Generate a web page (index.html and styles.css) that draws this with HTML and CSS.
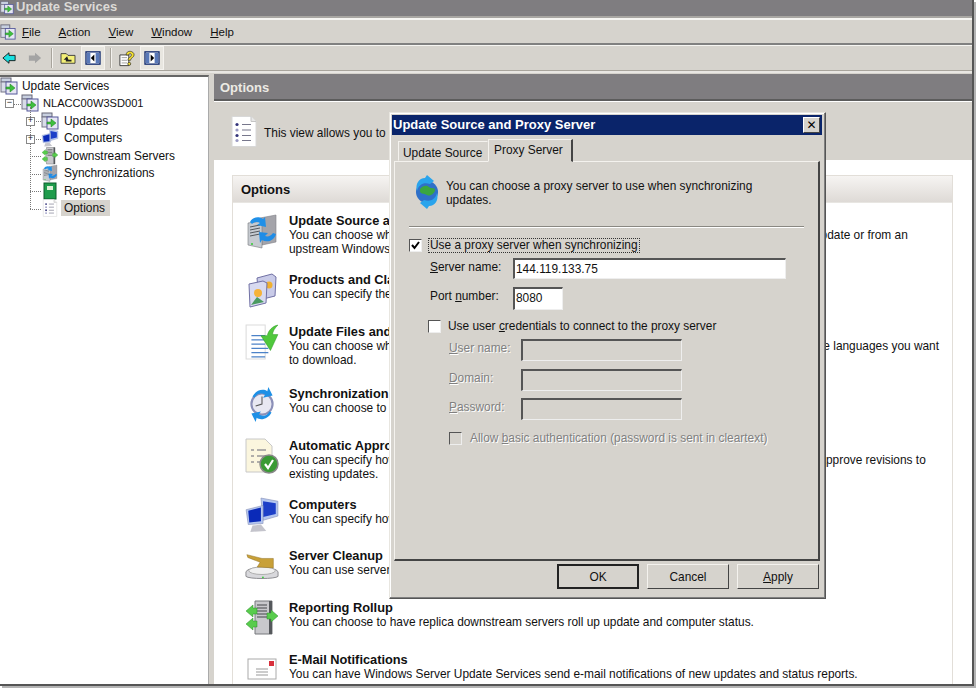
FILE: index.html
```html
<!DOCTYPE html>
<html lang="en">
<head>
<meta charset="utf-8">
<title>Update Services</title>
<link rel="stylesheet" href="styles.css">
</head>
<body>
<svg class="defs" width="0" height="0" aria-hidden="true">
  <defs>
    <symbol id="i-mmc" viewBox="0 0 18 18">
      <rect x="1" y="1" width="10" height="4" fill="#c8d0e0" stroke="#667"/>
      <rect x="1" y="5" width="8" height="10" fill="#d8dce8" stroke="#778"/>
      <rect x="6" y="5" width="11" height="12" fill="#e6e6f4" stroke="#55589a"/>
      <path d="M6 10h4V7l5 4-5 4v-3H6z" fill="#3fbf3f" stroke="#1c7c1c" stroke-width=".5"/>
    </symbol>
    <symbol id="i-list" viewBox="0 0 26 32">
      <path d="M1 1h19l5 5v25H1z" fill="#fff" stroke="#d8d8d8"/>
      <path d="M20 1v5h5" fill="#e8e8e8" stroke="#c4c4c4"/>
      <g fill="#33337a"><circle cx="6" cy="9" r="1.6"/><circle cx="6" cy="20" r="1.6"/></g>
      <g fill="#9a9ac4"><circle cx="6" cy="14.500" r="1.600"/><circle cx="6" cy="25" r="1.600"/></g>
      <path d="M11 9h9M11 14.500h9M11 20h9M11 25h9" stroke="#77778c" stroke-width="1.200"/>
    </symbol>
    <symbol id="i-screens" viewBox="0 0 32 34">
      <path d="M15 1l16 3v14l-14 4z" fill="#b4c6f0" stroke="#8a94b8" stroke-width=".6"/>
      <path d="M17 4l12 2v10l-12 3z" fill="#1d3fc8"/>
      <path d="M1 12l16-4v17L3 26z" fill="#b4c6f0" stroke="#8a94b8" stroke-width=".6"/>
      <path d="M3 13l12-3v13L4 24z" fill="#0a2ab8"/>
      <path d="M7 27l8-1 5 6-15 1z" fill="#c4c4cc"/>
    </symbol>
    <symbol id="i-servers" viewBox="0 0 32 36">
      <path d="M14 5l16-3v27l-14 3z" fill="#a4a4aa" stroke="#808086" stroke-width=".6"/>
      <path d="M2 10l14-2v27L2 32z" fill="#c6cad0" stroke="#77787c" stroke-width=".6"/>
      <path d="M4 14l10-2M4 17l10-2M4 20l10-2M4 23l10-2" stroke="#55585c"/>
      <circle cx="6" cy="31" r="1" fill="#3c3"/>
      <path d="M4 9c2-5 9-6 13-3l2-2 1 10-9-2 3-2c-3-2-6-1-8 1z" fill="#2090e8"/>
      <path d="M30 21c-2 7-9 9-14 6l-2 3-1-11 9 1-3 3c3 1 6 0 8-3z" fill="#1f8ce6"/>
    </symbol>
    <symbol id="i-books" viewBox="0 0 32 36">
      <path d="M11 6l15-4 4 3-1 19-16 4z" fill="#c9cbe8" stroke="#7070a4"/>
      <circle cx="23" cy="13" r="3.500" fill="#f0b030"/>
      <path d="M3 12l14-3 4 2-1 20-16 4z" fill="#d8daf0" stroke="#7070a4"/>
      <circle cx="12" cy="21" r="4" fill="#f5b23a"/>
      <path d="M5 33l6-8 7 5z" fill="#4a9a60"/>
    </symbol>
    <symbol id="i-download" viewBox="0 0 32 34">
      <path d="M1 1h18v32H1z" fill="#fff" stroke="#dcdcdc"/>
      <path d="M6 11h13M6 15h13M6 19h13M6 23h16M6 27h16M6 31h13" stroke="#4c82c8" stroke-width="1.300"/>
      <path d="M31 1c-5 1-9 5-10 10h-6l9 14 7-15h-5c0-3 2-6 5-9z" fill="#50c83c" stroke="#2f9c2a" stroke-width=".5"/>
    </symbol>
    <symbol id="i-clock" viewBox="0 0 28 34">
      <circle cx="14" cy="17" r="10" fill="#e8e8f2" stroke="#8c90b8" stroke-width="2"/>
      <path d="M14 10v7l-6 2" stroke="#555" fill="none"/>
      <path d="M5 10c3-6 10-8 14-5l1-4 4 8-9 2 2-3c-4-2-8-1-10 3z" fill="#1e90e6"/>
      <path d="M23 25c-3 6-10 8-14 5l-1 4-4-8 9-2-2 3c4 2 8 1 10-3z" fill="#1e90e6"/>
    </symbol>
    <symbol id="i-approve" viewBox="0 0 34 36">
      <path d="M1 1h19l7 7v26H1z" fill="#fbf6de" stroke="#c8c8c8"/>
      <path d="M6 12h3M12 12h9M6 18h3M12 18h9M6 24h3M12 24h5" stroke="#667" stroke-width="1.200"/>
      <circle cx="24" cy="26" r="9" fill="#3a9a34" stroke="#888" stroke-width="1.500"/>
      <path d="M20 26l3 4 5-8" stroke="#fff" stroke-width="2.200" fill="none"/>
    </symbol>
    <symbol id="i-cleanup" viewBox="0 0 36 36">
      <path d="M1 24c3-6 31-6 34 0v5c-3 3-31 3-34 0z" fill="#d8d8dc" stroke="#88888c"/>
      <ellipse cx="18" cy="23" rx="14" ry="4" fill="#f0f0f0" stroke="#aaa"/>
      <path d="M2 6l16 4 12 0v10l-17-1 3-5L3 9z" fill="#c8a038" stroke="#8c6c1c" stroke-width=".5"/>
      <circle cx="19" cy="30" r="1" fill="#3c3"/>
    </symbol>
    <symbol id="i-rollup" viewBox="0 0 34 36">
      <path d="M10 1h17v33H10z" fill="#c8c8cc" stroke="#77787c"/>
      <path d="M24 1l3 0v33h-3z" fill="#55585c"/>
      <path d="M12 5h10M12 8h10M12 11h10M12 14h10M12 17h10" stroke="#44464a"/>
      <path d="M1 11l7-6v3h4v6H8v3zM1 24l7-6v3h4v6H8v3z" fill="#58cc4c" stroke="#2c8c2c" stroke-width=".5"/>
      <path d="M33 16l-7-6v3h-4v6h4v3z" fill="#58cc4c" stroke="#2c8c2c" stroke-width=".5"/>
    </symbol>
    <symbol id="i-mail" viewBox="0 0 34 36">
      <rect x="3" y="7" width="28" height="20" fill="#fff" stroke="#aaa"/>
      <rect x="24" y="9" width="5" height="5" fill="#d8303c"/>
      <path d="M11 17h12M11 20h12M11 23h12" stroke="#999"/>
    </symbol>
    <symbol id="i-sync" viewBox="0 0 28 36">
      <circle cx="14" cy="18" r="11" fill="#2f70c8"/>
      <path d="M7 15c3-4 7-4 9-2s6 0 6 3-5 7-8 5-8 0-7-6z" fill="#3aa640"/>
      <path d="M14 1l7 6-4 3c-6-2-11 0-13 7C2 10 6 4 12 4z" fill="#2aa4ec"/>
      <path d="M14 35l-7-6 4-3c6 2 11 0 13-7 2 7-2 13-8 13z" fill="#2aa4ec"/>
    </symbol>
  </defs>
</svg>

<div class="window">
  <header class="titlebar">
    <svg class="tb-icon"><use href="#i-mmc"/></svg>
    <span class="title-text">Update Services</span>
  </header>

  <nav class="menubar">
    <svg class="menu-icon"><use href="#i-mmc"/></svg>
    <span class="menu-item"><u>F</u>ile</span>
    <span class="menu-item"><u>A</u>ction</span>
    <span class="menu-item"><u>V</u>iew</span>
    <span class="menu-item"><u>W</u>indow</span>
    <span class="menu-item"><u>H</u>elp</span>
  </nav>

  <div class="toolbar">
    <svg class="tool" viewBox="0 0 16 16"><path d="M1 8l7-6v3h7v6H8v3z" fill="#19e0e0" stroke="#111" stroke-width="1"/></svg>
    <svg class="tool tool-gap" viewBox="0 0 16 16"><path d="M15 8L8 2v3H1v6h7v3z" fill="#a4a4a4"/></svg>
    <span class="tool-sep"></span>
    <svg class="tool" viewBox="0 0 18 16"><path d="M1 14V3h6l2 2h8v9z" fill="#f4f078" stroke="#333"/><path d="M8 6L4 10h2.500v2H13v-2H9.500z" fill="#222"/></svg>
    <span class="tool-btn"><svg class="tool" viewBox="0 0 18 16"><rect x="1" y="1" width="16" height="14" fill="#fff" stroke="#0a246a" stroke-width="1.500"/><rect x="2" y="2" width="4" height="12" fill="#5878b8"/><rect x="12" y="2" width="4" height="12" fill="#5878b8"/><path d="M10.500 4L6.500 8l4 4z" fill="#000"/></svg></span>
    <span class="tool-sep"></span>
    <svg class="tool tool-help" viewBox="0 0 18 18"><path d="M1 5h10v12H1z" fill="#fff" stroke="#333"/><path d="M3 8h6M3 11h6M3 14h6" stroke="#999"/><path d="M8 5c0-6 9-5 9 0 0 3-4 3-4 6h-3c0-4 4-3 4-6 0-2-3-2-3 0z" fill="#f4e030" stroke="#222" stroke-width=".7"/><circle cx="11.500" cy="15" r="1.700" fill="#f4e030" stroke="#222" stroke-width=".7"/></svg>
    <span class="tool-btn"><svg class="tool" viewBox="0 0 18 16"><rect x="1" y="1" width="16" height="14" fill="#fff" stroke="#0a246a" stroke-width="1.500"/><rect x="2" y="2" width="4" height="12" fill="#5878b8"/><rect x="12" y="2" width="4" height="12" fill="#5878b8"/><path d="M7.500 4l4 4-4 4z" fill="#000"/></svg></span>
  </div>

  <main class="panes">
    <aside class="tree">
      <div class="tree-row tree-top"><svg class="tree-icon"><use href="#i-mmc"/></svg><span class="tree-label">Update Services</span></div>
      <div class="tree-row tree-top tree-server"><span class="toggle">−</span><svg class="tree-icon"><use href="#i-mmc"/></svg><span class="tree-label">NLACC00W3SD001</span></div>
      <div class="tree-children">
        <div class="tree-row child"><span class="toggle">+</span><svg class="tree-icon"><use href="#i-mmc"/></svg><span class="tree-label">Updates</span></div>
        <div class="tree-row child"><span class="toggle">+</span><svg class="tree-icon"><use href="#i-screens"/></svg><span class="tree-label">Computers</span></div>
        <div class="tree-row child"><svg class="tree-icon"><use href="#i-rollup"/></svg><span class="tree-label">Downstream Servers</span></div>
        <div class="tree-row child"><svg class="tree-icon"><use href="#i-servers"/></svg><span class="tree-label">Synchronizations</span></div>
        <div class="tree-row child"><svg class="tree-icon" viewBox="0 0 16 18"><rect x="2" y="1" width="12" height="16" fill="#1f9c4c" stroke="#0c5c2c"/><rect x="5" y="4" width="6" height="4" fill="#dff0d8"/></svg><span class="tree-label">Reports</span></div>
        <div class="tree-row child last"><svg class="tree-icon"><use href="#i-list"/></svg><span class="tree-label selected">Options</span></div>
      </div>
    </aside>

    <section class="content">
      <h1 class="content-head">Options</h1>
      <div class="intro">
        <svg class="intro-icon"><use href="#i-list"/></svg>
        <p>This view allows you to configure Windows Server Update Services settings.</p>
      </div>
      <div class="body">
        <div class="card">
          <h2 class="card-head">Options</h2>
          <div class="row row-59">
            <svg class="row-icon"><use href="#i-servers"/></svg>
            <div><b>Update Source and Proxy Server</b><br>You can choose whether this Windows Server Update Services server synchronizes from Microsoft Update or from an<br>upstream Windows Server Update Services server.</div>
          </div>
          <div class="row row-52">
            <svg class="row-icon"><use href="#i-books"/></svg>
            <div><b>Products and Classifications</b><br>You can specify the products for which you want updates and the types of updates you want.</div>
          </div>
          <div class="row row-62">
            <svg class="row-icon"><use href="#i-download"/></svg>
            <div><b>Update Files and Languages</b><br>You can choose whether to download update files and where you store them. You may also choose the languages you want<br>to download.</div>
          </div>
          <div class="row row-52">
            <svg class="row-icon"><use href="#i-clock"/></svg>
            <div><b>Synchronization Schedule</b><br>You can choose to synchronize manually or set a schedule for daily automatic synchronization.</div>
          </div>
          <div class="row row-59">
            <svg class="row-icon"><use href="#i-approve"/></svg>
            <div><b>Automatic Approvals</b><br>You can specify how to automatically approve installation of updates for specified groups and how to approve revisions to<br>existing updates.</div>
          </div>
          <div class="row row-51">
            <svg class="row-icon"><use href="#i-screens"/></svg>
            <div><b>Computers</b><br>You can specify how you assign computers to groups.</div>
          </div>
          <div class="row row-52">
            <svg class="row-icon"><use href="#i-cleanup"/></svg>
            <div><b>Server Cleanup</b><br>You can use server cleanup to free up old computers, updates and update files from your server.</div>
          </div>
          <div class="row row-52">
            <svg class="row-icon"><use href="#i-rollup"/></svg>
            <div><b>Reporting Rollup</b><br>You can choose to have replica downstream servers roll up update and computer status.</div>
          </div>
          <div class="row row-52">
            <svg class="row-icon"><use href="#i-mail"/></svg>
            <div><b>E-Mail Notifications</b><br>You can have Windows Server Update Services send e-mail notifications of new updates and status reports.</div>
          </div>
        </div>
      </div>
    </section>
  </main>
</div>

<div class="dialog">
  <div class="dlg-title">
    <span>Update Source and Proxy Server</span>
    <span class="dlg-close">✕</span>
  </div>
  <div class="tabs">
    <span class="tab">Update Source</span>
    <span class="tab tab-active">Proxy Server</span>
  </div>
  <div class="tab-panel">
    <div class="panel-intro">
      <svg class="panel-icon"><use href="#i-sync"/></svg>
      <p>You can choose a proxy server to use when synchronizing updates.</p>
    </div>
    <hr class="rule">
    <div class="check-line check-proxy">
      <span class="check"><svg viewBox="0 0 11 11"><path d="M2 5l2.500 3L9 2" fill="none" stroke="#000" stroke-width="2"/></svg></span>
      <span class="focus">Use a proxy server when synchronizing</span>
    </div>
    <div class="field field-server">
      <label class="field-label"><u>S</u>erver name:</label>
      <span class="input input-server">144.119.133.75</span>
    </div>
    <div class="field field-port">
      <label class="field-label">Port <u>n</u>umber:</label>
      <span class="input input-port">8080</span>
    </div>
    <div class="check-line check-creds">
      <span class="check"></span>
      <span>Use user <u>c</u>redentials to connect to the proxy server</span>
    </div>
    <div class="sub-field">
      <label class="sub-label disabled"><u>U</u>ser name:</label>
      <span class="input input-off"></span>
    </div>
    <div class="sub-field">
      <label class="sub-label disabled"><u>D</u>omain:</label>
      <span class="input input-off"></span>
    </div>
    <div class="sub-field">
      <label class="sub-label disabled"><u>P</u>assword:</label>
      <span class="input input-off"></span>
    </div>
    <div class="check-line check-basic">
      <span class="check check-off"></span>
      <span class="disabled">Allow <u>b</u>asic authentication (password is sent in cleartext)</span>
    </div>
  </div>
  <div class="buttons">
    <span class="btn btn-default">OK</span>
    <span class="btn">Cancel</span>
    <span class="btn"><u>A</u>pply</span>
  </div>
</div>
</body>
</html>
```

FILE: styles.css
```css
* { box-sizing: border-box; }
html, body { margin: 0; padding: 0; }
body {
  width: 976px;
  height: 688px;
  overflow: hidden;
  background: #fff;
  font: 11.900px/14px "Liberation Sans", Arial, sans-serif;
  color: #111;
  position: relative;
}
.defs { position: absolute; }

.window {
  width: 974px;
  height: 686px;
  background: #d6d3cd;
  border-right: 2px solid #555;
  border-bottom: 2px solid #555;
  box-shadow: 2px 2px 0 #b4b4b4;
  display: flex;
  flex-direction: column;
  overflow: hidden;
}

.titlebar {
  height: 18px;
  flex: none;
  background: #7f7d80;
  color: #dcdad6;
  font-weight: bold;
  font-size: 13px;
  display: flex;
  align-items: flex-start;
  border-bottom: 2px solid #a8a6a2;
  overflow: hidden;
}
.title-text { line-height: 14px; margin-left: 2px; }
.tb-icon { width: 14px; height: 15px; flex: none; }

.menubar {
  height: 27px;
  flex: none;
  display: flex;
  align-items: center;
  font-size: 11.500px;
  border-top: 2px solid #f6f5f2;
  border-bottom: 2px solid #808080;
}
.menu-icon { width: 16px; height: 18px; flex: none; margin-right: 6px; }
.menu-item { margin-right: 18px; }

.toolbar {
  height: 25px;
  flex: none;
  display: flex;
  align-items: center;
  padding-left: 1px;
  border-top: 1px solid #f6f5f2;
}
.tool { width: 16px; height: 14px; flex: none; display: block; }
.tool-gap { margin-left: 10px; }
.tool-help { height: 17px; }
.tool-sep { width: 2px; height: 20px; margin: 0 7px 0 8px; background: #a8a49c; border-right: 1px solid #f4f2ee; }
.tool-btn { padding: 4px 3px; margin-left: 5px; height: 24px; background: #e8e6e0; border: 1px solid #f4f2ee; }
.tool-btn + .tool-sep { margin-left: 5px; }

.panes {
  flex: 1;
  min-height: 0;
  display: flex;
  gap: 5px;
  padding-top: 4px;
  background: linear-gradient(#a8a49c 1px, #e8e6e2 1px, #e8e6e2 3px, #d6d3cd 3px);
}

.tree {
  width: 209px;
  flex: none;
  background: #fff;
  margin-top: 1px;
  border-top: 2px solid #666;
  border-right: 1px solid #aaa;
}
.tree-row {
  height: 17.500px;
  display: flex;
  align-items: center;
  position: relative;
}
.tree-icon { width: 18px; height: 18px; flex: none; }
.tree-label { margin-left: 2px; padding: 1px 3px; white-space: nowrap; }
.tree-top .tree-label { margin-left: 1px; }
.tree-server { padding-left: 21px; }
.tree-server .tree-label { font-size: 11.100px; }
.tree-server::before {
  content: "";
  position: absolute;
  left: 14px;
  width: 7px;
  top: 9px;
  border-top: 1px dotted #777;
}
.tree-children {
  position: relative;
}
.tree-children::before {
  content: "";
  position: absolute;
  left: 30px;
  top: -5px;
  bottom: 8px;
  border-left: 1px dotted #777;
}
.child { padding-left: 41px; }
.child::before {
  content: "";
  position: absolute;
  left: 30px;
  width: 11px;
  top: 9px;
  border-top: 1px dotted #777;
}
.toggle {
  position: absolute;
  width: 9px;
  height: 9px;
  background: #fff;
  border: 1px solid #888;
  font: 9px/7px "Liberation Mono", monospace;
  text-align: center;
  z-index: 1;
}
.child .toggle { left: 26px; top: 5px; }
.tree-server .toggle { left: 5px; top: 4px; }
.selected { background: #d6d3cd; padding-left: 3px; padding-right: 5px; }

.content {
  flex: 1;
  min-width: 0;
  display: flex;
  flex-direction: column;
  background: #fff;
}
.content-head {
  height: 27px;
  flex: none;
  margin: 0;
  background: #7f7d80;
  color: #eceae4;
  font-size: 13px;
  font-weight: bold;
  line-height: 27px;
  padding-left: 6px;
  border-bottom: 2px solid #5c5c5c;
}
.intro {
  height: 59px;
  flex: none;
  display: flex;
  align-items: center;
  gap: 7px;
  padding-left: 17px;
  background: #d6d3cd;
  border-top: 1px solid #fff;
}
.intro p { margin: 4px 0 0; }
.intro-icon { width: 26px; height: 33px; flex: none; }

.body {
  flex: 1;
  min-height: 0;
  padding: 15px 19px 0 18px;
  overflow: hidden;
}
.card {
  border: 1px solid #e2ded8;
  height: 600px;
}
.card-head {
  height: 27px;
  margin: 0;
  font-size: 13px;
  line-height: 27px;
  padding-left: 8px;
  background: linear-gradient(#f6f4f2, #dedad6);
  border-bottom: 1px solid #e8e6e2;
}
.row {
  display: flex;
  padding-left: 56px;
  position: relative;
  white-space: nowrap;
}
.row b { font-size: 12.800px; }
.row-icon {
  position: absolute;
  left: 12px;
  top: -1px;
  width: 34px;
  height: 36px;
}
.row:first-of-type { margin-top: 11px; }
.row-51 { height: 51px; }
.row-52 { height: 52px; }
.row-59 { height: 59px; }
.row-62 { height: 62px; }

.dialog {
  position: absolute;
  left: 389px;
  top: 112px;
  width: 437px;
  height: 487px;
  background: #d6d3cd;
  border: 1px solid;
  border-color: #e8e6e0 #555 #555 #e8e6e0;
  padding: 2px;
  box-shadow: inset -1px -1px 0 #808080, inset 1px 1px 0 #fff;
}
.dlg-title {
  height: 20px;
  margin: 0 1px 0 0;
  background: #0a246a;
  color: #fff;
  font-weight: bold;
  font-size: 13px;
  line-height: 20px;
  padding: 0 2px 0 1px;
  display: flex;
  justify-content: space-between;
  align-items: center;
}
.dlg-close {
  width: 17px;
  height: 16px;
  background: #d6d3cd;
  color: #000;
  font: bold 12px/14px "DejaVu Sans", sans-serif;
  text-align: center;
  border: 1px solid;
  border-color: #fff #444 #444 #fff;
}
.tabs {
  height: 26px;
  display: flex;
  align-items: flex-end;
  padding-left: 6px;
  position: relative;
  z-index: 1;
}
.tab {
  height: 20px;
  width: 90px;
  padding: 4px 0 0 4px;
  border: 1px solid;
  border-color: #f4f2ee transparent transparent #f4f2ee;
}
.tab-active {
  height: 23px;
  width: 85px;
  margin-bottom: -1px;
  padding-left: 5px;
  padding-top: 3px;
  background: #d6d3cd;
  border-color: #f4f2ee #444 #d6d3cd #f4f2ee;
  border-right-width: 2px;
}
.tab-panel {
  width: 426px;
  height: 400px;
  margin-left: 2px;
  border: 1px solid;
  border-color: #f4f2ee #444 #444 #f4f2ee;
  border-width: 1px 2px 2px 1px;
  position: relative;
}
.panel-intro {
  display: flex;
  gap: 5px;
  padding: 12px 0 0 18px;
  height: 64px;
}
.panel-intro p { margin: 5px 0 0; width: 340px; }
.panel-icon { width: 28px; height: 36px; flex: none; }
.rule {
  margin: 0 14px;
  border: 0;
  border-top: 1px solid #8a8882;
  border-bottom: 1px solid #fff;
}
.check-line { display: flex; align-items: center; }
.check {
  width: 13px;
  height: 13px;
  flex: none;
  background: #fff;
  border: 1px solid;
  border-color: #555 #eee #eee #555;
}
.check svg { display: block; width: 11px; height: 11px; }
.check-off { background: #d6d3cd; }
.check-proxy { margin: 10px 0 0 14px; gap: 6px; }
.focus { border: 1px dotted #333; padding: 0 1px; line-height: 13px; }
.field { display: flex; align-items: center; margin-left: 35px; }
.field-server { margin-top: 5px; }
.field-port { margin-top: 8px; }
.field-label { width: 83px; }
.field-server .field-label { padding-bottom: 3px; }
.field-port .field-label { padding-bottom: 5px; }
.input {
  height: 22px;
  background: #fff;
  border: 1px solid;
  border-color: #555 #eee #eee #555;
  border-width: 2px 1px 1px 2px;
  padding-left: 1px;
  line-height: 19px;
}
.input-server { width: 273px; height: 21px; line-height: 18px; }
.input-port { width: 50px; height: 23px; }
.check-creds { margin: 9px 0 0 33px; gap: 7px; }
.sub-field { display: flex; align-items: center; height: 22px; margin: 7.500px 0 0 54px; }
.check-creds + .sub-field { margin-top: 6px; }
.sub-label { width: 72px; padding-bottom: 4px; }
.input-off { width: 161px; background: #d6d3cd; }
.check-basic { margin: 11px 0 0 54px; gap: 8px; }
.disabled { color: #808080; text-shadow: 1px 1px 0 #fff; }
.buttons {
  display: flex;
  justify-content: flex-end;
  gap: 8px;
  margin: 3px 4px 0 0;
}
.btn {
  width: 82px;
  height: 25px;
  line-height: 25px;
  text-align: center;
  border: 1px solid;
  border-color: #f4f2ee #444 #444 #f4f2ee;
}
.btn-default { border: 2px solid #222; line-height: 23px; }
```
